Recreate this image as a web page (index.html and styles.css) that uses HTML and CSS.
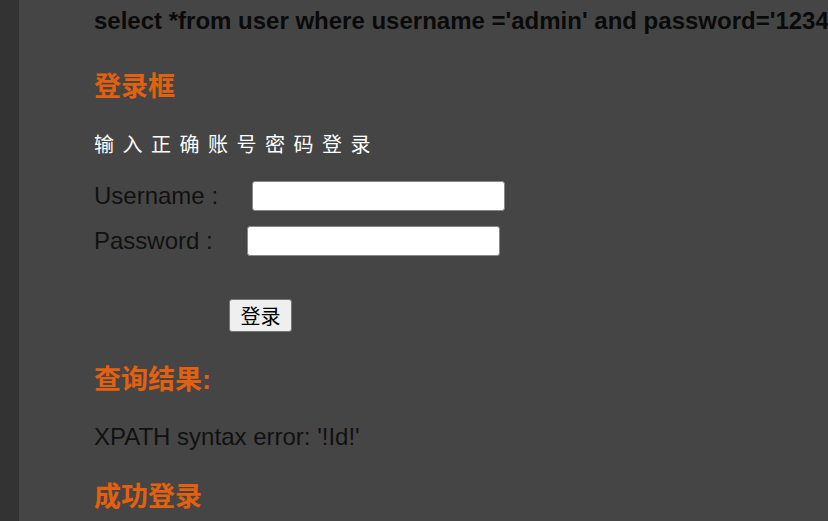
FILE: index.html
```html
<!DOCTYPE html>
<html>
<head>
<meta charset="utf-8">
<link rel="stylesheet" href="styles.css">
</head>
<body>
<div class="page">
  <div class="side"></div>
  <main class="main">
    <p class="sql">select *from user where username ='admin' and password='123456'</p>
    <h2 class="title t1">登录框</h2>
    <p class="tip">输入正确账号密码登录</p>
    <form class="form">
      <div class="row row-user"><span class="label">Username :</span><input class="field" type="text"></div>
      <div class="row row-pass"><span class="label">Password :</span><input class="field" type="password"></div>
      <div class="btn-row"><button type="button" class="btn">登录</button></div>
    </form>
    <h2 class="title t2">查询结果:</h2>
    <p class="result">XPATH syntax error: '!Id!'</p>
    <h2 class="title t3">成功登录</h2>
  </main>
</div>
</body>
</html>
```
FILE: styles.css
```css
html, body {
  margin: 0;
  padding: 0;
  height: 100%;
  overflow: hidden;
  background: #454545;
}
.page {
  display: flex;
  min-height: 521px;
}
.side {
  width: 19px;
  flex: 0 0 19px;
  background: #333333;
}
.main {
  flex: 1;
  min-width: 0;
  background: #454545;
  padding: 9px 0 0 75px;
  font-family: "Liberation Sans", Arial, "Noto Sans CJK SC", sans-serif;
  color: #111;
  overflow: hidden;
}
p { margin: 0; }
.sql {
  font-size: 24px;
  font-weight: bold;
  line-height: 24px;
  white-space: nowrap;
  color: #0a0a0a;
}
.title {
  margin: 0;
  font-family: "Liberation Sans", Arial, "Noto Sans CJK SC", sans-serif;
  font-size: 27px;
  line-height: 32px;
  font-weight: bold;
  color: #e3600f;
}
.t1 { margin-top: 38px; }
.tip {
  margin-top: 30px;
  font-size: 20px;
  line-height: 24px;
  letter-spacing: 8.5px;
  color: #ffffff;
}
.form { margin: 24px 0 0 0; }
.row {
  display: flex;
  align-items: center;
  height: 30px;
  font-size: 24px;
}
.row-pass { margin-top: 15px; }
.row-user .label { width: 158px; }
.row-pass .label { width: 153px; }
.label { color: #111; }
.field {
  box-sizing: border-box;
  width: 253px;
  height: 30px;
  border: 1px solid #888;
  border-radius: 3px;
  background: #fff;
  margin: 0;
}
.btn-row { margin-top: 43px; padding-left: 135px; }
.btn {
  box-sizing: border-box;
  width: 63px;
  height: 33px;
  font-family: "Noto Sans CJK SC", sans-serif;
  font-size: 20px;
  line-height: 1;
  padding: 0;
  background: #efefef;
  color: #000;
  border: 1px solid #767676;
  border-radius: 3px;
}
.t2 { margin-top: 32px; }
.result {
  margin-top: 29px;
  font-size: 24px;
  line-height: 24px;
  color: #111;
}
.t3 { margin-top: 32px; }
```
